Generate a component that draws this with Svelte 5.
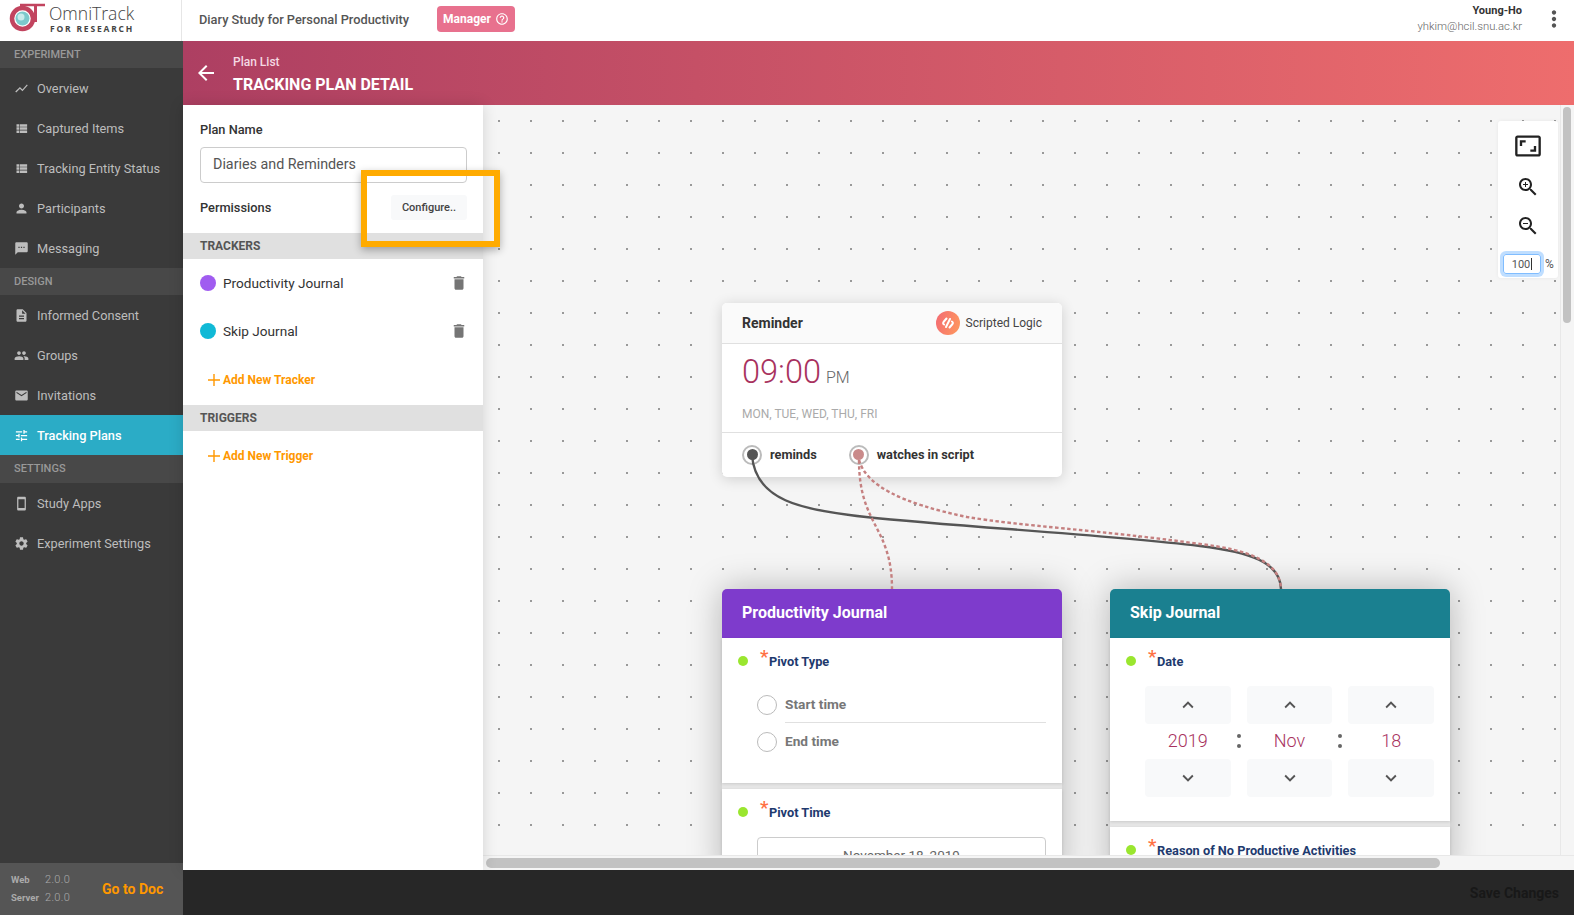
<script>
	const icons = {
		chart: 'M3.5 18.49l6-6.01 4 4L22 6.92l-1.41-1.41-7.09 7.97-4-4L2 16.99z',
		list: 'M4 14h4v-4H4v4zm0 5h4v-4H4v4zM4 9h4V5H4v4zm5 5h12v-4H9v4zm0 5h12v-4H9v4zM9 5v4h12V5H9z',
		person: 'M12 12c2.21 0 4-1.79 4-4s-1.79-4-4-4-4 1.79-4 4 1.79 4 4 4zm0 2c-2.67 0-8 1.34-8 4v2h16v-2c0-2.66-5.33-4-8-4z',
		sms: 'M20 2H4c-1.1 0-1.99.9-1.99 2L2 22l4-4h14c1.1 0 2-.9 2-2V4c0-1.1-.9-2-2-2zM9 11H7V9h2v2zm4 0h-2V9h2v2zm4 0h-2V9h2v2z',
		doc: 'M14 2H6c-1.1 0-1.99.9-1.99 2L4 20c0 1.1.89 2 1.99 2H18c1.1 0 2-.9 2-2V8l-6-6zm2 16H8v-2h8v2zm0-4H8v-2h8v2zm-3-5V3.5L18.5 9H13z',
		group: 'M16 11c1.66 0 2.99-1.34 2.99-3S17.66 5 16 5c-1.66 0-3 1.34-3 3s1.34 3 3 3zm-8 0c1.66 0 2.99-1.34 2.99-3S9.66 5 8 5C6.34 5 5 6.34 5 8s1.34 3 3 3zm0 2c-2.33 0-7 1.17-7 3.5V19h14v-2.5c0-2.33-4.67-3.5-7-3.5zm8 0c-.29 0-.62.02-.97.05 1.16.84 1.97 1.97 1.97 3.45V19h6v-2.5c0-2.33-4.67-3.5-7-3.5z',
		email: 'M20 4H4c-1.1 0-1.99.9-1.99 2L2 18c0 1.1.9 2 2 2h16c1.1 0 2-.9 2-2V6c0-1.1-.9-2-2-2zm0 4l-8 5-8-5V6l8 5 8-5v2z',
		tune: 'M3 17v2h6v-2H3zM3 5v2h10V5H3zm10 16v-2h8v-2h-8v-2h-2v6h2zM7 9v2H3v2h4v2h2V9H7zm14 4v-2H11v2h10zm-6-4h2V7h4V5h-4V3h-2v6z',
		phone: 'M17 1.01L7 1c-1.1 0-2 .9-2 2v18c0 1.1.9 2 2 2h10c1.1 0 2-.9 2-2V3c0-1.1-.9-1.99-2-1.99zM17 19H7V5h10v14z',
		gear: 'M19.43 12.98c.04-.32.07-.64.07-.98s-.03-.66-.07-.98l2.11-1.65c.19-.15.24-.42.12-.64l-2-3.46c-.12-.22-.39-.3-.61-.22l-2.49 1c-.52-.4-1.08-.73-1.69-.98l-.38-2.65C14.46 2.18 14.25 2 14 2h-4c-.25 0-.46.18-.49.42l-.38 2.65c-.61.25-1.17.59-1.69.98l-2.49-1c-.23-.09-.49 0-.61.22l-2 3.46c-.13.22-.07.49.12.64l2.11 1.65c-.04.32-.07.65-.07.98s.03.66.07.98l-2.11 1.65c-.19.15-.24.42-.12.64l2 3.46c.12.22.39.3.61.22l2.49-1c.52.4 1.08.73 1.69.98l.38 2.65c.03.24.24.42.49.42h4c.25 0 .46-.18.49-.42l.38-2.65c.61-.25 1.17-.59 1.69-.98l2.49 1c.23.09.49 0 .61-.22l2-3.46c.12-.22.07-.49-.12-.64l-2.11-1.65zM12 15.5c-1.93 0-3.5-1.57-3.5-3.5s1.57-3.5 3.5-3.5 3.5 1.57 3.5 3.5-1.57 3.5-3.5 3.5z',
		trash: 'M6 19c0 1.1.9 2 2 2h8c1.1 0 2-.9 2-2V7H6v12zM19 4h-3.5l-1-1h-5l-1 1H5v2h14V4z',
		up: 'M7.41 15.41L12 10.83l4.59 4.58L18 14l-6-6-6 6z',
		down: 'M7.41 8.59L12 13.17l4.59-4.58L18 10l-6 6-6-6z'
	};

	const nav = [
		{ title: 'EXPERIMENT', items: [
			{ label: 'Overview', icon: 'chart' },
			{ label: 'Captured Items', icon: 'list' },
			{ label: 'Tracking Entity Status', icon: 'list' },
			{ label: 'Participants', icon: 'person' },
			{ label: 'Messaging', icon: 'sms' }
		] },
		{ title: 'DESIGN', items: [
			{ label: 'Informed Consent', icon: 'doc' },
			{ label: 'Groups', icon: 'group' },
			{ label: 'Invitations', icon: 'email' },
			{ label: 'Tracking Plans', icon: 'tune', active: true }
		] },
		{ title: 'SETTINGS', tall: true, items: [
			{ label: 'Study Apps', icon: 'phone' },
			{ label: 'Experiment Settings', icon: 'gear' }
		] }
	];

	const trackers = [
		{ name: 'Productivity Journal', color: '#a05cf0' },
		{ name: 'Skip Journal', color: '#10b9d6' }
	];

	const dateParts = ['2019', 'Nov', '18'];
</script>

<div class="page">
	<header class="topbar">
		<div class="brand">
			<svg width="38" height="34" viewBox="0 0 38 34">
				<circle cx="14.5" cy="16.5" r="10.5" fill="none" stroke="#c2445f" stroke-width="4.5" />
				<circle cx="14.5" cy="16.5" r="7" fill="#7cc9cc" />
				<circle cx="13" cy="15" r="3.5" fill="#c8ecec" />
				<path d="M12 3h25" stroke="#c2445f" stroke-width="2.5" />
				<path d="M27.5 3v17" stroke="#c2445f" stroke-width="3" />
			</svg>
			<div class="brand-text">
				<span class="brand-name">OmniTrack</span>
				<span class="brand-sub">FOR RESEARCH</span>
			</div>
		</div>
		<div class="study">Diary Study for Personal Productivity</div>
		<div class="role">
			Manager
			<svg width="14" height="14" viewBox="0 0 24 24" fill="#fff"><path d="M11 18h2v-2h-2v2zm1-16C6.48 2 2 6.48 2 12s4.48 10 10 10 10-4.48 10-10S17.52 2 12 2zm0 18c-4.41 0-8-3.59-8-8s3.59-8 8-8 8 3.59 8 8-3.59 8-8 8zm0-14c-2.21 0-4 1.79-4 4h2c0-1.1.9-2 2-2s2 .9 2 2c0 2-3 1.75-3 5h2c0-2.25 3-2.5 3-5 0-2.21-1.79-4-4-4z" /></svg>
		</div>
		<div class="user">
			<strong>Young-Ho</strong>
			<span>yhkim@hcil.snu.ac.kr</span>
		</div>
		<svg class="more" width="26" height="26" viewBox="0 0 24 24" fill="#555"><path d="M12 8c1.1 0 2-.9 2-2s-.9-2-2-2-2 .9-2 2 .9 2 2 2zm0 2c-1.1 0-2 .9-2 2s.9 2 2 2 2-.9 2-2-.9-2-2-2zm0 6c-1.1 0-2 .9-2 2s.9 2 2 2 2-.9 2-2-.9-2-2-2z" /></svg>
	</header>

	<div class="body">
		<aside class="sidebar">
			<nav class="nav">
				{#each nav as section}
					<div class="nav-title" class:tall={section.tall}>{section.title}</div>
					{#each section.items as item}
						<div class="nav-item" class:active={item.active}>
							<svg width="15" height="15" viewBox="0 0 24 24" fill="currentColor"><path d={icons[item.icon]} /></svg>
							<span>{item.label}</span>
						</div>
					{/each}
				{/each}
			</nav>
			<div class="versions">
				<div class="version-table">
					<div><b>Web</b><span>2.0.0</span></div>
					<div><b>Server</b><span>2.0.0</span></div>
				</div>
				<div class="doc-link">Go to Doc</div>
			</div>
		</aside>

		<main class="main">
			<div class="planbar">
				<svg width="24" height="24" viewBox="0 0 24 24" fill="#fff"><path d="M20 11H7.83l5.59-5.59L12 4l-8 8 8 8 1.41-1.41L7.83 13H20v-2z" /></svg>
				<div class="planbar-text">
					<div class="crumb">Plan List</div>
					<div class="plan-title">TRACKING PLAN DETAIL</div>
				</div>
			</div>

			<div class="content">
				<section class="panel">
					<div class="panel-top">
						<div class="field-label">Plan Name</div>
						<div class="name-input">Diaries and Reminders</div>
						<div class="perm-row">
							<span class="field-label">Permissions</span>
							<span class="configure">Configure..</span>
						</div>
					</div>
					<div class="panel-head">TRACKERS</div>
					<div class="trackers">
						{#each trackers as t}
							<div class="tracker">
								<span class="tracker-dot" style="background: {t.color}"></span>
								<span class="tracker-name">{t.name}</span>
								<svg width="18" height="18" viewBox="0 0 24 24" fill="#757575"><path d={icons.trash} /></svg>
							</div>
						{/each}
					</div>
					<div class="add-row">
						<svg width="12" height="12" viewBox="0 0 12 12"><path d="M6 0v12M0 6h12" stroke="#ff9800" stroke-width="1.4" /></svg>
						Add New Tracker
					</div>
					<div class="panel-head">TRIGGERS</div>
					<div class="add-row">
						<svg width="12" height="12" viewBox="0 0 12 12"><path d="M6 0v12M0 6h12" stroke="#ff9800" stroke-width="1.4" /></svg>
						Add New Trigger
					</div>
					<div class="highlight"></div>
				</section>

				<section class="canvas-wrap">
					<div class="canvas-row">
						<div class="canvas">
							<div class="node reminder">
								<div class="reminder-head">
									<strong>Reminder</strong>
									<svg class="logic-badge" width="24" height="24" viewBox="0 0 24 24">
										<defs>
											<linearGradient id="badge" x1="0" y1="0" x2="1" y2="0.3">
												<stop offset="0" stop-color="#f36a73" />
												<stop offset="1" stop-color="#fd9260" />
											</linearGradient>
										</defs>
										<circle cx="12" cy="12" r="12" fill="url(#badge)" />
										<path d="M10.5 7.5L7.5 11c-.8 1-.3 2 .6 2.5M13.5 16.5l3-3.5c.8-1 .3-2-.6-2.5M14 8l-4 8" stroke="#fff" stroke-width="2" fill="none" stroke-linecap="round" />
									</svg>
									<span>Scripted Logic</span>
								</div>
								<div class="reminder-body">
									<div class="time"><span>09:00</span><small>PM</small></div>
									<div class="days">MON, TUE, WED, THU, FRI</div>
								</div>
								<div class="ports">
									<div class="port-item">
										<span class="port"><i></i></span>
										reminds
									</div>
									<div class="port-item">
										<span class="port soft"><i></i></span>
										watches in script
									</div>
								</div>
							</div>

							<div class="node tracker-card productivity">
								<div class="card-head purple">Productivity Journal</div>
								<div class="field radio-field">
									<div class="field-title"><span class="status"></span><span class="star">*</span>Pivot Type</div>
									<div class="radio first"><span class="radio-circle"></span><span class="radio-text">Start time</span></div>
									<div class="radio"><span class="radio-circle"></span><span class="radio-text">End time</span></div>
								</div>
								<div class="field">
									<div class="field-title"><span class="status"></span><span class="star">*</span>Pivot Time</div>
									<div class="date-input">November 18, 2019</div>
								</div>
							</div>

							<div class="node tracker-card skip">
								<div class="card-head teal">Skip Journal</div>
								<div class="field date-field">
									<div class="field-title"><span class="status"></span><span class="star">*</span>Date</div>
									<div class="spinner">
										{#each dateParts as part, i}
											{#if i > 0}<span class="colon"><i></i><i></i></span>{/if}
											<div class="spin-col">
												<div class="spin-btn"><svg width="22" height="22" viewBox="0 0 24 24" fill="#555"><path d={icons.up} /></svg></div>
												<div class="spin-value">{part}</div>
												<div class="spin-btn"><svg width="22" height="22" viewBox="0 0 24 24" fill="#555"><path d={icons.down} /></svg></div>
											</div>
										{/each}
									</div>
								</div>
								<div class="field">
									<div class="field-title"><span class="status"></span><span class="star">*</span>Reason of No Productive Activities</div>
								</div>
							</div>

							<svg class="wires" width="1077" height="750" viewBox="483 105 1077 750" fill="none">
								<path d="M752 455C755 500 800 510 866 517C960 527 1100 534 1200 546C1250 552 1280 562 1281 589" stroke="#555" stroke-width="2.4" />
								<path d="M859 460C859 526 892 526 892 589" stroke="#c58080" stroke-width="2.4" stroke-dasharray="3.5 2.5" />
								<path d="M859 460C866 485 900 503 967 517C1020 526 1100 530 1200 544C1250 550 1280 562 1281 589" stroke="#c58080" stroke-width="2.4" stroke-dasharray="3.5 2.5" />
							</svg>

							<div class="zoom-tools">
								<svg width="28" height="28" viewBox="0 0 24 24" fill="#222"><path d="M19 12h-2v3h-3v2h5v-5zM7 9h3V7H5v5h2V9zm14-6H3c-1.1 0-2 .9-2 2v14c0 1.1.9 2 2 2h18c1.1 0 2-.9 2-2V5c0-1.1-.9-2-2-2zm0 16.01H3V4.99h18v14.02z" /></svg>
								<svg width="24" height="24" viewBox="0 0 24 24" fill="#222"><path d="M15.5 14h-.79l-.28-.27C15.41 12.59 16 11.11 16 9.5 16 5.91 13.09 3 9.5 3S3 5.91 3 9.5 5.91 16 9.5 16c1.61 0 3.09-.59 4.23-1.57l.27.28v.79l5 4.99L20.49 19l-4.99-5zm-6 0C7.01 14 5 11.99 5 9.5S7.01 5 9.5 5 14 7.01 14 9.5 11.99 14 9.5 14zm2.5-4h-2v2H9v-2H7V9h2V7h1v2h2v1z" /></svg>
								<svg width="24" height="24" viewBox="0 0 24 24" fill="#222"><path d="M15.5 14h-.79l-.28-.27C15.41 12.59 16 11.11 16 9.5 16 5.91 13.09 3 9.5 3S3 5.91 3 9.5 5.91 16 9.5 16c1.61 0 3.09-.59 4.23-1.57l.27.28v.79l5 4.99L20.49 19l-4.99-5zm-6 0C7.01 14 5 11.99 5 9.5S7.01 5 9.5 5 14 7.01 14 9.5 11.99 14 9.5 14zM7 9h5v1H7z" /></svg>
								<div class="zoom-row">
									<div class="zoom-input">100<i></i></div>
									<span>%</span>
								</div>
							</div>
						</div>
						<div class="vscroll"><div class="vthumb"></div></div>
					</div>
					<div class="hscroll"><div class="hthumb"></div></div>
				</section>
			</div>

			<footer class="savebar"><span>Save Changes</span></footer>
		</main>
	</div>
</div>

<style>
	:global(body) {
		margin: 0;
		background: #fff;
		font-family: Roboto, "Liberation Sans", sans-serif;
	}

	.page {
		width: 1576px;
		height: 915px;
		display: flex;
		flex-direction: column;
		overflow: hidden;
	}

	.topbar {
		height: 41px;
		flex: none;
		box-sizing: border-box;
		padding-bottom: 3px;
		display: flex;
		align-items: center;
		background: #fff;
	}

	.brand {
		width: 182px;
		height: 41px;
		flex: none;
		box-sizing: border-box;
		border-right: 1px solid #e6e6e6;
		margin-right: 17px;
		margin-bottom: -3px;
		display: flex;
		align-items: center;
		padding: 0 0 3px 8px;
		gap: 3px;
	}

	.brand-text {
		display: flex;
		flex-direction: column;
		font-family: "Open Sans", sans-serif;
		color: #444;
	}

	.brand-name {
		font-size: 17.5px;
		font-weight: 300;
		line-height: 19px;
	}

	.brand-sub {
		font-size: 8.5px;
		font-weight: 700;
		letter-spacing: 1.8px;
		line-height: 11px;
		margin-left: 1px;
	}

	.study {
		font-size: 12.8px;
		font-weight: 500;
		color: #555;
		margin-right: 28px;
	}

	.role {
		height: 26px;
		padding: 0 6px;
		background: #e8718e;
		border-radius: 4px;
		color: #fff;
		font-size: 12px;
		font-weight: 700;
		display: flex;
		align-items: center;
		gap: 4px;
	}

	.user {
		margin-left: auto;
		margin-right: 19px;
		display: flex;
		flex-direction: column;
		align-items: flex-end;
		font-size: 11.3px;
		line-height: 16px;
		color: #666;
		font-weight: 300;
	}

	.user strong {
		color: #333;
		font-size: 11px;
		font-weight: 700;
	}

	.more {
		margin-right: 9px;
	}

	.body {
		flex: 1;
		display: flex;
		min-height: 0;
	}

	.sidebar {
		width: 183px;
		flex: none;
		background: #3a3a3a;
		display: flex;
		flex-direction: column;
	}

	.nav {
		flex: 1;
	}

	.nav-title {
		height: 27px;
		line-height: 27px;
		padding-left: 14px;
		background: #484848;
		color: #999;
		font-size: 11px;
		font-weight: 500;
	}

	.nav-title.tall {
		height: 28px;
	}

	.nav-item {
		height: 40px;
		display: flex;
		align-items: center;
		padding-left: 14px;
		gap: 8px;
		color: #bdbdbd;
		font-size: 12.75px;
	}

	.nav-item.active {
		background: #2bacc6;
		color: #fff;
		font-weight: 500;
	}

	.versions {
		height: 52px;
		background: #555;
		display: flex;
		align-items: center;
		padding-left: 11px;
		gap: 32px;
	}

	.version-table {
		font-size: 9.5px;
		color: #aaa;
		line-height: 18px;
	}

	.version-table b {
		display: inline-block;
		width: 34px;
		font-weight: 700;
	}

	.version-table span {
		font-size: 11px;
		font-weight: 300;
		letter-spacing: 0.3px;
	}

	.doc-link {
		color: #ff9800;
		font-size: 14px;
		font-weight: 700;
	}

	.main {
		width: 1391px;
		flex: none;
		display: flex;
		flex-direction: column;
		min-height: 0;
	}

	.planbar {
		height: 64px;
		flex: none;
		box-sizing: border-box;
		background: linear-gradient(90deg, #ad3f62, #ee6d6d);
		display: flex;
		align-items: center;
		padding: 0 0 0 11px;
		gap: 15px;
		color: #fff;
	}

	.planbar-text {
		padding-top: 4px;
	}

	.crumb {
		font-size: 12px;
		font-weight: 500;
		color: #f5d9e2;
		line-height: 16px;
	}

	.plan-title {
		font-size: 16px;
		font-weight: 700;
		line-height: 24px;
		margin-top: 3px;
	}

	.content {
		flex: 1;
		display: flex;
		min-height: 0;
	}

	.panel {
		width: 300px;
		flex: none;
		background: #fff;
		position: relative;
		z-index: 2;
		box-shadow: 0 0 14px rgba(0, 0, 0, 0.14);
	}

	.panel-top {
		padding: 17px 16px 0 17px;
		height: 128px;
		box-sizing: border-box;
	}

	.field-label {
		font-size: 12.8px;
		font-weight: 500;
		color: #333;
		line-height: 16px;
	}

	.name-input {
		margin-top: 9px;
		height: 36px;
		box-sizing: border-box;
		border: 1px solid #ccc;
		border-radius: 4px;
		padding-left: 12px;
		font-size: 14.3px;
		line-height: 33px;
		color: #555;
	}

	.perm-row {
		display: flex;
		justify-content: space-between;
		align-items: center;
		margin-top: 12px;
	}

	.configure {
		height: 25px;
		width: 76px;
		background: #f8f9fa;
		border-radius: 3px;
		font-size: 11px;
		font-weight: 500;
		color: #444;
		text-align: center;
		line-height: 25px;
	}

	.panel-head {
		height: 26px;
		line-height: 26px;
		background: #e0e0e0;
		padding-left: 17px;
		font-size: 12px;
		font-weight: 700;
		color: #555;
	}

	.tracker {
		height: 48px;
		display: flex;
		align-items: center;
		padding: 0 15px 0 17px;
		font-size: 13.6px;
		color: #333;
	}

	.tracker-dot {
		width: 16px;
		height: 16px;
		border-radius: 50%;
		margin-right: 7px;
	}

	.tracker-name {
		flex: 1;
	}

	.add-row {
		height: 50px;
		display: flex;
		align-items: center;
		padding-left: 25px;
		gap: 3px;
		font-size: 12px;
		font-weight: 700;
		color: #ff9800;
	}

	.highlight {
		position: absolute;
		left: 178px;
		top: 65px;
		width: 139px;
		height: 77px;
		box-sizing: border-box;
		border: 6px solid #ffab00;
		box-shadow: 0 3px 8px rgba(0, 0, 0, 0.3);
	}

	.canvas-wrap {
		flex: 1;
		min-width: 0;
		display: flex;
		flex-direction: column;
	}

	.canvas-row {
		flex: 1;
		display: flex;
		min-height: 0;
	}

	.canvas {
		flex: 1;
		position: relative;
		overflow: hidden;
		background-color: #f5f5f5;
		background-image: radial-gradient(circle at center, #999 0, #999 1px, transparent 1.5px);
		background-size: 32px 32px;
	}

	.wires {
		position: absolute;
		left: 0;
		top: 0;
	}

	.node {
		position: absolute;
		width: 340px;
		background: #fff;
		border-radius: 5px;
	}

	.reminder {
		left: 239px;
		top: 198px;
		height: 174px;
		box-shadow: 0 2px 14px rgba(0, 0, 0, 0.16);
		display: flex;
		flex-direction: column;
	}

	.reminder-head {
		height: 40px;
		flex: none;
		background: #fafafa;
		border-bottom: 1px solid #e0e0e0;
		border-radius: 5px 5px 0 0;
		display: flex;
		align-items: center;
		padding: 0 20px;
		font-size: 12px;
		color: #444;
	}

	.reminder-head strong {
		font-size: 14px;
		font-weight: 700;
		color: #333;
		margin-right: auto;
	}

	.logic-badge {
		margin-right: 6px;
	}

	.reminder-body {
		height: 88px;
		flex: none;
		border-bottom: 1px solid #e0e0e0;
		padding-left: 20px;
	}

	.time {
		font-size: 32.5px;
		font-weight: 300;
		color: #a8325e;
		line-height: 40px;
		margin-top: 8px;
	}

	.time small {
		font-size: 16px;
		color: #666;
		margin-left: 5px;
	}

	.days {
		font-size: 12px;
		color: #aaa;
		margin-top: 9px;
	}

	.ports {
		flex: 1;
		display: flex;
		align-items: center;
		padding: 0 0 1px 20px;
		gap: 32px;
		font-size: 12.75px;
		font-weight: 700;
		color: #333;
	}

	.port-item {
		display: flex;
		align-items: center;
		gap: 8px;
	}

	.port {
		width: 20px;
		height: 20px;
		box-sizing: border-box;
		border: 2px solid #bbb;
		border-radius: 50%;
		display: flex;
		align-items: center;
		justify-content: center;
	}

	.port i {
		width: 11px;
		height: 11px;
		border-radius: 50%;
		background: #555;
	}

	.port.soft i {
		background: #c98a8a;
	}

	.tracker-card {
		top: 484px;
		box-shadow: 0 0 34px rgba(0, 0, 0, 0.27);
		background: #e6e6e6;
	}

	.productivity {
		left: 239px;
	}

	.skip {
		left: 627px;
	}

	.card-head {
		height: 49px;
		line-height: 47px;
		padding-left: 20px;
		font-size: 16px;
		font-weight: 700;
		color: #fff;
		border-radius: 5px 5px 0 0;
	}

	.purple {
		background: #7e3bcc;
	}

	.teal {
		background: #1a8090;
	}

	.field {
		background: #fff;
		margin-bottom: 6px;
		box-shadow: 0 1px 3px rgba(0, 0, 0, 0.12);
	}

	.field-title {
		height: 46px;
		display: flex;
		align-items: center;
		padding-left: 16px;
		font-size: 12.75px;
		font-weight: 700;
		color: #1e3a6e;
	}

	.status {
		width: 10px;
		height: 10px;
		border-radius: 50%;
		background: #9ae62f;
		margin-right: 10px;
	}

	.star {
		color: #ff7043;
		font-size: 19px;
		font-weight: 500;
		width: 11px;
		position: relative;
		left: 2px;
		top: -5px;
		line-height: 1;
	}

	.radio-field {
		height: 145px;
	}

	.radio {
		display: flex;
		align-items: center;
		height: 37px;
		margin: 0 16px 0 35px;
	}

	.radio.first {
		margin-top: 2px;
	}

	.radio-circle {
		width: 20px;
		height: 20px;
		box-sizing: border-box;
		border: 1px solid #bbb;
		border-radius: 50%;
		margin-right: 8px;
		flex: none;
	}

	.radio-text {
		flex: 1;
		font-size: 13.7px;
		font-weight: 700;
		color: #777;
		line-height: 37px;
	}

	.radio.first .radio-text {
		border-bottom: 1px solid #e0e0e0;
		line-height: 35px;
	}

	.date-input {
		margin: 2px 16px 0 35px;
		height: 36px;
		box-sizing: border-box;
		border: 1px solid #ccc;
		border-radius: 4px;
		text-align: center;
		font-size: 13.5px;
		line-height: 34px;
		color: #666;
	}

	.date-field {
		height: 183px;
	}

	.spinner {
		display: flex;
		align-items: flex-start;
		margin: 2px 16px 0 35px;
	}

	.spin-col {
		flex: 1;
		text-align: center;
	}

	.spin-btn {
		height: 38px;
		background: #f8f9fa;
		border-radius: 4px;
		display: flex;
		align-items: center;
		justify-content: center;
	}

	.spin-value {
		height: 35px;
		line-height: 33px;
		font-size: 18px;
		font-weight: 300;
		color: #a8325e;
	}

	.colon {
		width: 16px;
		flex: none;
		display: flex;
		flex-direction: column;
		align-items: center;
		gap: 6px;
		margin-top: 48px;
	}

	.colon i {
		width: 4px;
		height: 4px;
		border-radius: 50%;
		background: #666;
	}

	.zoom-tools {
		position: absolute;
		left: 1015px;
		top: 16px;
		width: 60px;
		height: 157px;
		background: #fff;
		border-radius: 3px;
		box-shadow: 0 0 4px rgba(0, 0, 0, 0.06);
		display: flex;
		flex-direction: column;
		align-items: center;
		padding-top: 11px;
		box-sizing: border-box;
	}

	.zoom-tools svg {
		margin-bottom: 15px;
	}

	.zoom-row {
		align-self: flex-start;
		margin-left: 5px;
		margin-top: 1px;
		display: flex;
		align-items: center;
		gap: 4px;
		font-size: 12px;
		color: #555;
	}

	.zoom-input {
		width: 38px;
		height: 20px;
		box-sizing: border-box;
		border: 1px solid #80bdff;
		border-radius: 3px;
		box-shadow: 0 0 0 3px rgba(0, 123, 255, 0.25);
		font-size: 11px;
		color: #555;
		display: flex;
		justify-content: center;
		align-items: center;
		gap: 1px;
	}

	.zoom-input i {
		width: 1px;
		height: 12px;
		background: #333;
	}

	.vscroll {
		width: 14px;
		flex: none;
		background: #f5f5f5;
		border-left: 1px solid #e8e8e8;
		box-sizing: border-box;
		padding: 2px 3px 0 2px;
	}

	.vthumb {
		height: 216px;
		background: #c2c2c2;
		border-radius: 5px;
	}

	.hscroll {
		height: 15px;
		flex: none;
		background: #f5f5f5;
		border-top: 1px solid #e8e8e8;
		box-sizing: border-box;
		padding: 2px 0 0 3px;
	}

	.hthumb {
		width: 954px;
		height: 10px;
		background: #c2c2c2;
		border-radius: 5px;
	}

	.savebar {
		height: 45px;
		flex: none;
		background: #272727;
		position: relative;
		z-index: 3;
		display: flex;
		align-items: center;
		justify-content: flex-end;
		padding-right: 15px;
		font-size: 14px;
		font-weight: 700;
		color: #181818;
	}
</style>
